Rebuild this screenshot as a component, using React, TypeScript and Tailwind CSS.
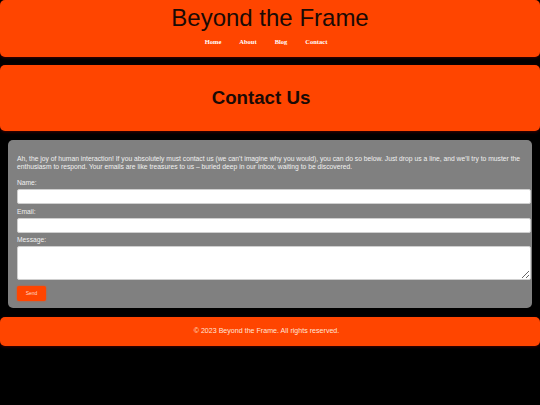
import React from 'react';

const navLinks = ['Home', 'About', 'Blog', 'Contact'];

export default function App() {
  return (
    <div className="min-h-[405px] bg-black font-['Liberation_Sans',Arial,sans-serif]">
      {/* Header */}
      <header className="h-[57px] bg-[#ff4500] rounded-[5px] shadow-[0_1px_3px_rgba(80,0,0,0.8)] flex flex-col items-center pt-[4px]">
        <h1 className="text-[24px] leading-[28px] text-[#1a0a05]">Beyond the Frame</h1>
        <nav className="flex gap-[18px] mt-[5px] pr-[8px]">
          {navLinks.map(link => (
            <a
              key={link}
              href="#"
              className="font-['Liberation_Serif','Times_New_Roman',serif] font-bold text-[6.5px] text-white"
            >
              {link}
            </a>
          ))}
        </nav>
      </header>

      {/* Hero */}
      <section className="mt-[8px] h-[66px] bg-[#ff4500] rounded-[5px] shadow-[0_1px_3px_rgba(80,0,0,0.8)] flex items-center justify-center pr-[18px]">
        <h2 className="text-[18.7px] font-bold text-[#1a0a05]">Contact Us</h2>
      </section>

      {/* Contact form */}
      <main className="mx-[8px] mt-[9px] h-[168px] bg-[#808080] rounded-[5px] shadow-[0_1px_3px_rgba(0,0,0,0.8)] pl-[9px] pt-[15px]">
        <p className="text-[6.75px] leading-[8px] text-[#f0f0f0] w-[510px]">
          Ah, the joy of human interaction! If you absolutely must contact us (we can't imagine why you would), you can do so below. Just drop us a line, and we'll try to muster the enthusiasm to respond. Your emails are like treasures to us – buried deep in our inbox, waiting to be discovered.
        </p>
        <form className="mt-[8px] flex flex-col" onSubmit={e => e.preventDefault()}>
          <label className="text-[6.7px] leading-[8px] text-[#f0f0f0]">Name:</label>
          <input type="text" className="mt-[2px] w-[514px] h-[15px] bg-white rounded-[2px] border border-[#cfcfcf]" />
          <label className="mt-[3.5px] text-[6.7px] leading-[8px] text-[#f0f0f0]">Email:</label>
          <input type="email" className="mt-[2px] w-[514px] h-[15px] bg-white rounded-[2px] border border-[#cfcfcf]" />
          <label className="mt-[3.5px] text-[6.7px] leading-[8px] text-[#f0f0f0]">Message:</label>
          <textarea className="mt-[2px] w-[514px] h-[34px] bg-white rounded-[2px] border border-[#cfcfcf] resize-y" />
          <button
            type="submit"
            className="mt-[6px] w-[29px] h-[15px] bg-[#ff4500] rounded-[2px] text-[5px] text-[#ffd9c8] shadow-[0_0_2px_rgba(255,69,0,0.8)]"
          >
            Send
          </button>
        </form>
      </main>

      {/* Footer */}
      <footer className="mt-[9px] h-[29px] bg-[#ff4500] rounded-[5px] shadow-[0_1px_3px_rgba(80,0,0,0.8)] flex items-center justify-center pr-[7px]">
        <p className="text-[7.1px] text-[#ffe4d8]">© 2023 Beyond the Frame. All rights reserved.</p>
      </footer>
    </div>
  );
}
